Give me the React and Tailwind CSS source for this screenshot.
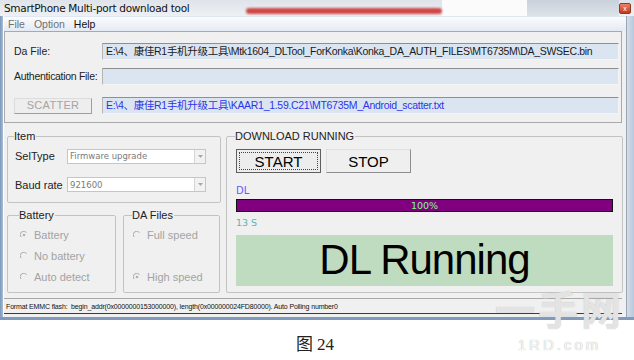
import React from 'react'

const cjk = "font-['Liberation_Sans','Noto_Sans_CJK_SC',sans-serif]"

function PathBox({ children, blue }) {
  return (
    <div
      className={`h-[17px] flex-1 min-w-0 bg-[#dbe5f2] border-t border-l border-t-[#8f8f8f] border-l-[#b5b5b5] border-b border-r border-b-[#f4f4f4] border-r-[#f4f4f4] pl-[3px] text-[10.5px] tracking-[-0.3px] leading-[15px] whitespace-nowrap overflow-hidden ${cjk} ${blue ? 'text-[#2b35e8]' : 'text-[#1a1a1a]'}`}
    >
      {children}
    </div>
  )
}

function Combo({ value }) {
  return (
    <div className="w-[139px] h-[15px] bg-white border border-[#c6c6c6] flex items-center">
      <span className="flex-1 pl-[2px] text-[8.5px] text-[#7a7a7a] font-['DejaVu_Sans',sans-serif] leading-none">{value}</span>
      <div className="w-[11px] h-[13px] bg-[#f2f2f2] border-l border-[#d6d6d6] flex items-center justify-center">
        <svg width="5" height="3" viewBox="0 0 5 3"><path d="M0 0h5L2.5 3z" fill="#a8a8a8" /></svg>
      </div>
    </div>
  )
}

function Radio({ label, checked }) {
  return (
    <div className="flex items-center gap-[6px] h-[14px] text-[11px] text-[#a3a3a3]">
      <svg width="8" height="8" viewBox="0 0 8 8">
        <path d="M1 6A3.2 3.2 0 0 1 6.5 1.5" stroke="#a8a8a8" strokeWidth="1" fill="none" />
        {checked && <circle cx="4" cy="4" r="1.3" fill="#b0b0b0" />}
      </svg>
      <span>{label}</span>
    </div>
  )
}

function Group({ label, className, children }) {
  return (
    <fieldset className={`min-w-0 border border-[#c3c3c3] rounded-[2px] ${className}`}>
      <legend className="ml-[-1px] px-0 pr-[1px] text-[11px] leading-[12px] text-[#222]">{label}</legend>
      {children}
    </fieldset>
  )
}

export default function App() {
  return (
    <div className="w-[634px] h-[360px] bg-white relative overflow-hidden font-['Liberation_Sans',sans-serif]">
      {/* window */}
      <div className="h-[320px] flex flex-col bg-[#c8d6e7]">
        {/* title bar */}
        <div className="h-[16px] flex items-center bg-gradient-to-b from-[#dfe4ea] to-[#eef0f3]">
          <span className="w-[246px] pl-[4px] text-[10.5px] leading-none text-[#111] font-['DejaVu_Sans',sans-serif] tracking-[-0.3px] whitespace-nowrap">
            SmartPhone Multi-port download tool
          </span>
          <div className="w-[196px] h-[6px] mt-[6px] rounded-full bg-[#cf4848] blur-[1px]" />
          <div className="w-[85px] h-[16px] bg-[#fbfbfb]" />
          <div className="flex-1 h-[16px] bg-gradient-to-b from-[#c9d1db] to-[#dde3ea]" />
          <div className="w-[12px] h-[11px] mr-[3px] bg-gradient-to-b from-[#e8846c] to-[#c3361e] border border-[#8d3a2a] rounded-[2px] flex items-center justify-center text-white text-[7px] leading-none">
            x
          </div>
        </div>
        <div className="flex flex-1 min-h-0">
          {/* left frame */}
          <div className="w-[4px] bg-gradient-to-r from-[#7c97ba] to-[#a9bdd6] border-r border-white" />
          {/* client */}
          <div className="flex-1 min-w-0 bg-[#f0f0f0] flex flex-col">
            {/* menu */}
            <div className="h-[15px] flex items-center gap-[9px] pl-[4px] text-[10.5px] leading-none bg-gradient-to-b from-[#fbfcfe] to-[#e4eaf3] border-t border-[#dfe7f2]">
              <span className="text-[#707070]">File</span>
              <span className="text-[#707070]">Option</span>
              <span className="text-[#111]">Help</span>
            </div>
            {/* top panel */}
            <div className="h-[92px] border border-[#a9a9a9] mr-[4px] pt-[11px] pl-[9px] pr-[2px] flex flex-col">
              <div className="flex items-center">
                <span className="w-[88px] shrink-0 text-[10.5px] text-[#222]">Da File:</span>
                <PathBox>E:\4、康佳R1手机升级工具\Mtk1604_DLTool_ForKonka\Konka_DA_AUTH_FILES\MT6735M\DA_SWSEC.bin</PathBox>
              </div>
              <div className="flex items-center mt-[8px]">
                <span className="w-[88px] shrink-0 text-[10.5px] tracking-[-0.3px] text-[#222] whitespace-nowrap">Authentication File:</span>
                <PathBox></PathBox>
              </div>
              <div className="flex items-center mt-[12px]">
                <div className="w-[88px] shrink-0">
                  <div className="w-[78px] h-[16px] border border-t-[#dcdcdc] border-l-[#dcdcdc] border-b-[#9e9e9e] border-r-[#9e9e9e] bg-[#eeeeee] flex items-center justify-center text-[11px] text-[#a5a5a5] tracking-[0.3px]">
                    SCATTER
                  </div>
                </div>
                <PathBox blue>E:\4、康佳R1手机升级工具\KAAR1_1.59.C21\MT6735M_Android_scatter.txt</PathBox>
              </div>
            </div>
            {/* lower area */}
            <div className="flex pt-[7px] pl-[3px] gap-[5px] pr-[3px]">
              <div className="w-[214px] shrink-0 flex flex-col gap-[6px]">
                <Group label="Item" className="h-[73px] pl-[7px] pt-[6px]">
                  <div className="flex items-center">
                    <span className="w-[52px] text-[11px] text-[#222]">SelType</span>
                    <Combo value="Firmware upgrade" />
                  </div>
                  <div className="flex items-center mt-[12px]">
                    <span className="w-[52px] text-[11px] text-[#222] whitespace-nowrap">Baud rate</span>
                    <Combo value="921600" />
                  </div>
                </Group>
                <div className="flex gap-[7px]">
                  <Group label="Battery" className="w-[109px] h-[84px] pl-[12px] pt-[7px]">
                    <div className="flex flex-col gap-[7px]">
                      <Radio label="Battery" checked />
                      <Radio label="No battery" />
                      <Radio label="Auto detect" />
                    </div>
                  </Group>
                  <Group label="DA Files" className="w-[97px] h-[84px] pl-[9px] pt-[7px]">
                    <div className="flex flex-col gap-[28px]">
                      <Radio label="Full speed" />
                      <Radio label="High speed" checked />
                    </div>
                  </Group>
                </div>
              </div>
              <Group label="DOWNLOAD RUNNING" className="flex-1 h-[163px] pl-[9px] pr-[9px] pt-[7px]">
                <div className="flex gap-[5px]">
                  <div className="w-[85px] h-[24px] border border-[#5f5f5f] bg-[#ededed] p-[2px]">
                    <div className="w-full h-full border border-dotted border-[#444] flex items-center justify-center text-[15px] text-black leading-none">
                      START
                    </div>
                  </div>
                  <div className="w-[85px] h-[24px] border border-t-[#e0e0e0] border-l-[#e0e0e0] border-b-[#8d8d8d] border-r-[#8d8d8d] bg-[#efefef] flex items-center justify-center text-[15px] text-black leading-none">
                    STOP
                  </div>
                </div>
                <div className="mt-[12px] text-[10px] leading-[12px] text-[#5d5dff] font-['DejaVu_Sans',sans-serif]">DL</div>
                <div className="mt-[2px] h-[13px] bg-[#800080] border border-[#111] flex items-center justify-center text-[9.5px] leading-none text-[#80ff80] font-['DejaVu_Sans',sans-serif]">
                  100%
                </div>
                <div className="mt-[5px] text-[9.5px] leading-[12px] text-[#5fb3b3] font-['DejaVu_Sans',sans-serif]">13 S</div>
                <div className="mt-[6px] h-[51px] bg-[#c0dcc0] flex items-center justify-center text-[42px] leading-none text-black tracking-[-1px] pb-[1px]">
                  DL Running
                </div>
              </Group>
            </div>
            {/* status bar */}
            <div className="mt-[5px] mr-[4px] h-[16px] border-t border-[#a8a8a8] border-b border-b-[#2f3c4c] flex items-center pl-[2px] text-[7px] leading-none text-[#111] whitespace-nowrap tracking-[-0.15px]">
              Format EMMC flash:&nbsp;&nbsp;begin_addr(0x0000000153000000), length(0x000000024FD80000). Auto Polling number0
            </div>
          </div>
          {/* right frame */}
          <div className="w-[8px] bg-gradient-to-r from-[#d3dde9] to-[#b8c8dc] border-l border-[#9aa6b4]" />
        </div>
        <div className="h-[3px] bg-[#7f9abd]" />
      </div>
      {/* caption */}
      <div className="flex justify-center pt-[16px] pr-[4px] text-[17px] leading-none text-[#222] font-['Liberation_Serif','Noto_Sans_CJK_SC',serif]">
        图 24
      </div>
      {/* watermark */}
      <div className="absolute right-[10px] top-[288px] flex flex-col items-center gap-[9px] pointer-events-none">
        <span className="text-[40px] leading-[40px] font-bold text-[#f2f2f2]/80 font-['Noto_Sans_CJK_SC',sans-serif] [text-shadow:0_0_1px_#b0b0b0] tracking-[3px]">一手网</span>
        <span className="text-[15px] leading-[15px] text-[#f6f6f6] [text-shadow:0_0_1px_#a8a8a8] tracking-[3px]">1RD.com</span>
      </div>
    </div>
  )
}
